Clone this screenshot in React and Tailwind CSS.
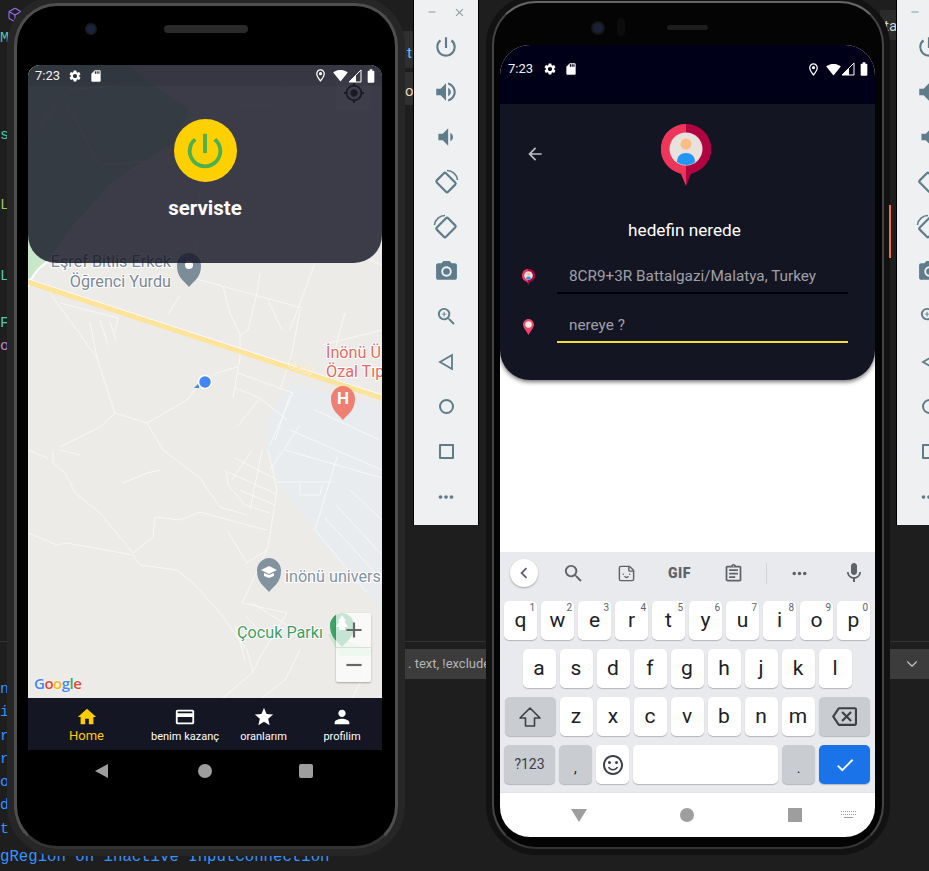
import {
  MdSettings, MdSdCard, MdOutlineLocationOn, MdSignalWifi4Bar, MdBatteryFull, MdHome, MdCreditCard, MdStar, MdPerson,
  MdPowerSettingsNew, MdVolumeUp, MdVolumeDown, MdPhotoCamera, MdOutlineZoomIn, MdMoreHoriz, MdGpsFixed, MdAdd, MdRemove,
  MdArrowBack, MdSearch, MdMic, MdCheck, MdOutlineBackspace, MdChevronLeft, MdClose, MdOutlineSentimentSatisfied, MdOutlineAssignment,
} from 'react-icons/md';
import { Box, ChevronDown, Sticker } from 'lucide-react';

function Signal() {
  return (
    <svg width="14" height="14" viewBox="0 0 14 14">
      <path d="M13 1V13H1Z" fill="none" stroke="#fff" strokeWidth="1" />
      <path d="M8 6V13H1Z" fill="#fff" />
    </svg>
  );
}

function StatusBar({ className, timeWidth }) {
  return (
    <div className={`flex items-center text-[13px] text-[#f1f1f1] ${className}`}>
      <span className={timeWidth}>7:23</span>
      <MdSettings size={14} className="text-white" />
      <MdSdCard size={14} className="ml-[7px] text-white" />
      <div className="flex-1" />
      <MdOutlineLocationOn size={15} className="text-white" />
      <MdSignalWifi4Bar size={15} className="ml-[5px] text-white" />
      <Signal />
      <MdBatteryFull size={16} className="ml-[1px] text-white" />
    </div>
  );
}

function PersonPin({ size }) {
  return (
    <svg width={size} height={size * 1.24} viewBox="0 0 50 62">
      <path d="M25 0A25 25 0 0 0 15 48L20 50L25 62Z" fill="#f0355a" />
      <path d="M25 0A25 25 0 0 1 35 48L30 50L25 62Z" fill="#b00540" />
      <circle cx="25" cy="25" r="16.5" fill="#e9e1dc" />
      <circle cx="25" cy="20" r="5.5" fill="#fbbd84" />
      <path d="M16 38C16 32 20 29 25 29C30 29 34 32 34 38C30 42 20 42 16 38Z" fill="#2196f3" />
    </svg>
  );
}

function DotPin() {
  return (
    <svg width="11" height="16" viewBox="0 0 22 32">
      <path d="M11 0C5 0 0 5 0 11C0 18 7 24 11 32C15 24 22 18 22 11C22 5 17 0 11 0Z" fill="#f0446a" />
      <circle cx="11" cy="11" r="6.5" fill="#f5ebe6" />
    </svg>
  );
}

function Pin({ x, y, color, children }) {
  return (
    <g transform={`translate(${x} ${y})`}>
      <path d="M0 17C-6 10-12 7-12-4.500C-12-11-6.500-17 0-17C6.500-17 12-11 12-4.500C12 7 6 10 0 17Z" fill={color} />
      {children}
    </g>
  );
}

const roads = [
  'M193 278L302 308', 'M223 287L230 313L240 335L240 357L233 398', 'M260 273L257 293L248 330L240 335', 'M180 295L168 315',
  'M50 293L97 358L115 413L147 423L187 400L197 387L217 373L237 367', 'M238 373L293 393', 'M235 388L260 398L287 420', 'M260 398L237 427',
  'M115 413L100 427L60 447', 'M147 423L163 450', 'M300 310L292 353L280 390', 'M345 313L340 330L335 350', 'M322 345L382 330',
  'M60 303L118 318L115 332', 'M90 322L97 358', 'M100 320L108 345', 'M110 322L116 340', 'M53 450L53 463L65 473L75 493L100 513L133 553',
  'M28 533L57 545L67 543L133 555', 'M133 553L153 537L155 517L180 520L200 512L247 525L267 530',
  'M133 555L140 565L177 570L193 583L220 613L247 650L253 672L223 698', 'M163 450L200 478L220 507L247 515', 'M123 483L147 473L160 470',
  'M228 532L247 563L267 550', 'M268 450L277 490L268 547L247 593L242 603', 'M337 457L315 530', 'M277 482L333 482', 'M300 484L300 495L320 495L322 485',
  'M226 470L228 485L245 505L270 513', 'M235 458L277 480', 'M228 472L276 494', 'M240 490L275 505', 'M252 450L232 480', 'M262 450L250 510',
  'M315 530L367 593', 'M325 518L382 580', 'M336 505L382 555', 'M350 490L382 520', 'M242 603L287 613L260 657L253 672', 'M252 603L287 625',
  'M245 615L268 640', 'M235 625L245 660', 'M28 450L48 458', 'M60 450L80 455', 'M300 650L285 680L262 698', 'M360 655L370 665L352 698',
  'M268 300L282 330', 'M315 410L380 440', 'M290 395L275 440', 'M293 393L270 445', 'M290 430L382 470', 'M300 425L270 470', 'M285 450L382 478',
  'M345 75L270 105L230 105L170 150L130 170L95 205L67 233', 'M275 75L300 95L355 135', 'M230 105L260 145L300 165L380 195',
  'M28 140L70 90L120 85', 'M67 105L100 165L170 160', 'M170 160L190 210L250 230', 'M300 165L360 255L382 265', 'M170 150L200 190L195 263',
  'M60 245L110 260', 'M315 263L290 330',
];

function MapArt() {
  return (
    <svg viewBox="28 65 354 633" width="354" height="633" className="absolute inset-0 block" fontFamily="Roboto, sans-serif">
      <rect x="28" y="65" width="354" height="633" fill="#ecebe8" />
      <path d="M265 423L290 383L382 405L382 610L367 593L315 537L316 530L277 483L268 450Z" fill="#e9ecef" />
      <path d="M28 65L130 65L145 80L190 110L173 143L110 183L67 233L50 257L40 270L28 280Z" fill="#c9e7c9" />
      <path d="M328 634L372 650L370 656L340 656Z" fill="#c9e7c9" />
      <g fill="none" stroke="#fff" strokeWidth="0.800" opacity="0.800">
        {roads.map((d) => <path key={d} d={d} />)}
      </g>
      <path d="M28 287C33 272 44 262 58 256" fill="none" stroke="#fff" strokeWidth="2" />
      <path d="M28 279L382 395" stroke="#fff" strokeWidth="1" />
      <path d="M28 282L382 398" stroke="#fde49b" strokeWidth="5" />
      <text x="300" y="372" transform="rotate(18 300 372)" fontSize="11" textAnchor="middle" fill="#fff" stroke="#f3d98b" strokeWidth="0.300">D300</text>

      <g fontSize="16.200" stroke="#fff" strokeWidth="2" style={{ paintOrder: 'stroke' }}>
        <text x="171" y="267" textAnchor="end" fill="#7a8894">Eşref Bitlis Erkek</text>
        <text x="171" y="287" textAnchor="end" fill="#7a8894">Öğrenci Yurdu</text>
        <text x="326" y="358" fill="#e56a60">İnönü Ü</text>
        <text x="326" y="377" fill="#e56a60">Özal Tıp</text>
        <text x="285" y="582" fill="#83929f">inönü univers</text>
        <text x="237" y="638" fill="#3f9d62">Çocuk Parkı</text>
      </g>

      <Pin x={189} y={270} color="#7d8c99"><circle cx="0" cy="-5" r="4" fill="#fff" /></Pin>
      <Pin x={343} y={403} color="#ef7f72">
        <text x="0" y="1" textAnchor="middle" fontSize="17" fontWeight="700" fill="#fff">H</text>
      </Pin>
      <Pin x={269} y={575} color="#83929f">
        <path d="M-8-5L0-9L8-5L0-1Z M-5-2L0 0L5-2L5 1L0 3L-5 1Z" fill="#fff" />
      </Pin>
      <Pin x={342} y={630} color="#3fa468">
        <path d="M0-15L4-9L2.500-9L6-3L3-3L3 0L-3 0L-3-3L-6-3L-2.500-9L-4-9Z" fill="#fff" />
      </Pin>

      <path d="M199 383L194 388L199 388Z" fill="#4285f4" />
      <circle cx="205" cy="382" r="6.500" fill="#4285f4" stroke="#fff" strokeWidth="1.500" />
    </svg>
  );
}

function Tab({ icon: Icon, label, className, size, labelClass }) {
  return (
    <div className={`flex flex-col items-center ${className}`}>
      <Icon size={size} />
      <span className={labelClass}>{label}</span>
    </div>
  );
}

function LeftPhone() {
  return (
    <div className="absolute left-[7px] top-[-4px] h-[860px] w-[398px] rounded-[50px] border-[7px] border-[#262626]">
      <div className="relative h-full w-full rounded-[43px] border-[3px] border-[#4e4e4e] border-b-[#333] bg-black pl-[11px] pt-[59px]">
        <div className="absolute left-[68px] top-[17px] h-[12px] w-[12px] rounded-full border-2 border-[#1b1b1e] bg-[#18233f]" />
        <div className="absolute left-[147px] top-[19px] h-[8px] w-[84px] rounded-full bg-[#2a2a2a]" />
        <div className="flex h-[730px] w-[354px] flex-col overflow-hidden rounded-t-[12px]">
          <div className="relative h-[633px] shrink-0 border-b border-[#c9c9c9]">
            <MapArt />
            <div className="absolute right-[11px] top-[10px] flex h-[35px] w-[35px] items-center justify-center bg-white/70 text-[#333]">
              <MdGpsFixed size={22} />
            </div>
            <div className="absolute bottom-[15px] right-[11px] flex h-[69px] w-[35px] flex-col rounded-[2px] bg-white/70 text-[#666] shadow-[0_1px_2px_rgba(0,0,0,.3)]">
              <div className="flex flex-1 items-center justify-center border-b border-[#ddd]"><MdAdd size={26} /></div>
              <div className="flex flex-1 items-center justify-center"><MdRemove size={26} /></div>
            </div>
            <div className="absolute bottom-[6px] left-[6px] flex text-[15px] font-semibold leading-none tracking-[-0.5px] [font-family:'Open_Sans',sans-serif] [text-shadow:0_0_2px_#fff]">
              <span className="text-[#4285f4]">G</span>
              <span className="text-[#ea4335]">o</span>
              <span className="text-[#fbbc05]">o</span>
              <span className="text-[#4285f4]">g</span>
              <span className="text-[#34a853]">l</span>
              <span className="text-[#ea4335]">e</span>
            </div>
            <div className="absolute left-0 right-0 top-0 flex h-[198px] flex-col items-center rounded-b-[28px] bg-[#151524]/[.82]">
              <StatusBar className="h-[21px] w-full shrink-0 bg-[#151524]/10 pl-[7px] pr-[3px]" timeWidth="w-[33px]" />
              <div className="mt-[33px] flex h-[63px] w-[63px] items-center justify-center rounded-full bg-[#ffd000]">
                <MdPowerSettingsNew size={46} className="text-[#4caf50]" />
              </div>
              <span className="mt-[14px] text-[20.500px] font-bold leading-[24px] text-white">serviste</span>
            </div>
          </div>
          <div className="flex h-[52px] shrink-0 bg-[#151623] pt-[8px] text-white">
            <Tab icon={MdHome} label="Home" size={22} className="w-[117px] text-[#ffcc00]" labelClass="text-[13px] leading-[16px]" />
            <Tab icon={MdCreditCard} label="benim kazanç" size={22} className="w-[80px]" labelClass="whitespace-nowrap text-[11px] leading-[17px]" />
            <Tab icon={MdStar} label="oranlarım" size={22} className="w-[77px]" labelClass="text-[11px] leading-[17px]" />
            <Tab icon={MdPerson} label="profilim" size={22} className="w-[80px]" labelClass="text-[11px] leading-[17px]" />
          </div>
          <div className="flex h-[42px] shrink-0 items-center pl-[67px]">
            <div className="h-0 w-0 border-y-[7px] border-r-[13px] border-y-transparent border-r-[#9e9e9e]" />
            <div className="ml-[90px] h-[14px] w-[14px] rounded-full bg-[#9e9e9e]" />
            <div className="ml-[87px] h-[14px] w-[14px] rounded-[2px] bg-[#9e9e9e]" />
          </div>
        </div>
      </div>
    </div>
  );
}

function Field({ pin, text, line }) {
  return (
    <div className="flex h-[49px] items-end pr-[27px]">
      <div className="flex h-[33px] w-[57px] items-center justify-center pr-[1px]">{pin}</div>
      <div className={`flex h-[34px] flex-1 items-center border-b-2 pl-[12px] text-[15.300px] text-[#9fa0a8] ${line}`}>{text}</div>
    </div>
  );
}

function Key({ label, sup, className = '', children }) {
  return (
    <div className={`relative flex h-[39px] w-[33px] shrink-0 items-center justify-center rounded-[5px] bg-white text-[21px] text-[#202124] shadow-[0_1px_1px_rgba(60,64,67,.3)] ${className}`}>
      {label}
      {children}
      {sup && <span className="absolute right-[2px] top-0 text-[10px] leading-[14px] text-[#5f6368]">{sup}</span>}
    </div>
  );
}

function Keyboard() {
  const row1 = [['q', '1'], ['w', '2'], ['e', '3'], ['r', '4'], ['t', '5'], ['y', '6'], ['u', '7'], ['i', '8'], ['o', '9'], ['p', '0']];
  return (
    <div className="h-[240px] bg-[#e8eaed]">
      <div className="flex h-[49px] items-center pb-[7px] text-[#5f6368]">
        <div className="ml-[10px] flex h-[28px] w-[28px] items-center justify-center rounded-full bg-white shadow-[0_1px_2px_rgba(0,0,0,.3)]">
          <MdChevronLeft size={22} />
        </div>
        <MdSearch size={23} className="ml-[24px]" />
        <Sticker size={19} strokeWidth={1.8} className="ml-[32px]" />
        <span className="ml-[32px] text-[14px] font-black tracking-[0.5px]">GIF</span>
        <MdOutlineAssignment size={21} className="ml-[32px]" />
        <div className="ml-[22px] h-[21px] w-px bg-[#d0d2d6]" />
        <MdMoreHoriz size={21} className="ml-[22px]" />
        <MdMic size={24} className="ml-[32px]" />
      </div>
      <div className="flex flex-col gap-[9px] pr-[1px]">
        <div className="flex justify-center gap-[4px]">
          {row1.map(([k, n]) => <Key key={k} label={k} sup={n} />)}
        </div>
        <div className="flex justify-center gap-[4px]">
          {['a', 's', 'd', 'f', 'g', 'h', 'j', 'k', 'l'].map((k) => <Key key={k} label={k} />)}
        </div>
        <div className="flex justify-center gap-[4px]">
          <Key className="!w-[51px] !bg-[#c9ccd1]">
            <svg width="22" height="22" viewBox="0 0 22 22"><path d="M11 2L21 12H15.500V20H6.500V12H1Z" fill="none" stroke="#3c4043" strokeWidth="1.600" strokeLinejoin="round" /></svg>
          </Key>
          {['z', 'x', 'c', 'v', 'b', 'n', 'm'].map((k) => <Key key={k} label={k} />)}
          <Key className="!w-[51px] !bg-[#c9ccd1]"><MdOutlineBackspace size={25} className="text-[#3c4043]" /></Key>
        </div>
        <div className="flex justify-center gap-[4px]">
          <Key label="?123" className="!w-[51px] !bg-[#c9ccd1] !text-[14px] !text-[#3c4043]" />
          <Key label="," className="!bg-[#c9ccd1] pt-[8px] !text-[14px]" />
          <Key><MdOutlineSentimentSatisfied size={24} className="text-[#3c4043]" /></Key>
          <Key className="!w-[145px]" />
          <Key label="." className="!bg-[#c9ccd1] pt-[8px] !text-[14px]" />
          <Key className="!w-[51px] !bg-[#1a73e8]"><MdCheck size={22} className="text-white" /></Key>
        </div>
      </div>
    </div>
  );
}

function RightPhone() {
  return (
    <div className="absolute left-[486px] top-[-5px] h-[860px] w-[404px] rounded-[50px] border-[6px] border-[#121212]">
      <div className="relative h-full w-full rounded-[44px] border-2 border-[#444] border-t-[#666] border-b-[#333] bg-[#040404] pl-[6px] pt-[42px]">
        <div className="absolute left-[97px] top-[18px] h-[14px] w-[14px] rounded-full border-2 border-[#15151a] bg-[#1a2136]" />
        <div className="absolute left-[123px] top-[15px] h-[18px] w-[8px] rounded-full bg-[#0c0c0c]" />
        <div className="absolute left-[173px] top-[22px] h-[5px] w-[41px] rounded-full bg-[#1d1d1d]" />
        <div className="flex h-[792px] w-[375px] flex-col overflow-hidden rounded-[30px] bg-white">
          <div className="h-[59px] shrink-0 bg-[#000018]">
            <StatusBar className="h-[48px] pl-[8px] pr-[3px]" timeWidth="w-[35px]" />
          </div>
          <div className="relative z-10 h-[276px] shrink-0 rounded-b-[30px] bg-[#141522] shadow-[0_2px_4px_rgba(0,0,0,.55)]">
            <div className="relative flex h-[112px] items-start justify-center pr-[4px] pt-[20px]">
              <MdArrowBack size={20} className="absolute left-[25px] top-[40px] text-[#bdbdc2]" />
              <PersonPin size={50} />
            </div>
            <div className="flex h-[30px] items-center justify-center pr-[6px] text-[17.200px] text-white">hedefin nerede</div>
            <div className="-mt-[1px]">
              <Field pin={<PersonPin size={13} />} text="8CR9+3R Battalgazi/Malatya, Turkey" line="border-[#00000f]" />
              <Field pin={<DotPin />} text="nereye ?" line="border-[#f5dc2e]" />
            </div>
          </div>
          <div className="flex-1" />
          <Keyboard />
          <div className="flex h-[45px] shrink-0 items-center border-t border-[#e1e3e6] pl-[71px]">
            <div className="h-0 w-0 border-x-[8px] border-t-[13px] border-x-transparent border-t-[#9e9e9e]" />
            <div className="ml-[93px] h-[14px] w-[14px] rounded-full bg-[#9e9e9e]" />
            <div className="ml-[94px] h-[14px] w-[14px] bg-[#9e9e9e]" />
            <div className="ml-[39px] flex h-[8px] w-[15px] flex-col gap-[2px]">
              <div className="border-t border-dotted border-[#9e9e9e]" />
              <div className="border-t border-dotted border-[#9e9e9e]" />
              <div className="mx-[3px] border-t border-[#9e9e9e]" />
            </div>
          </div>
        </div>
      </div>
    </div>
  );
}

function RotateIcon({ flip }) {
  return (
    <svg width="26" height="26" viewBox="0 0 26 26" fill="none" stroke="currentColor" strokeWidth="2.200" className={flip ? '-scale-x-100' : ''}>
      <rect x="5" y="7" width="16" height="13" rx="1.500" transform="rotate(45 13 13.500)" />
      <path d="M14 1.500C19 1.500 24 5.500 24.500 11" strokeWidth="1.600" />
    </svg>
  );
}

function Toolbar({ className }) {
  const icon = 'flex h-[45px] items-center justify-center';
  return (
    <div className={`absolute top-0 h-[525px] w-[66px] overflow-hidden border-x border-black bg-[#eef0f1] text-[#5f7c8a] ${className}`}>
      <div className="flex h-[24px] items-center pl-[12px] text-[#8a9aa3]">
        <MdRemove size={12} />
        <MdClose size={13} className="ml-[15px]" />
      </div>
      <div className={icon}><MdPowerSettingsNew size={26} /></div>
      <div className={icon}><MdVolumeUp size={26} /></div>
      <div className={icon}><MdVolumeDown size={26} /></div>
      <div className={icon}><RotateIcon /></div>
      <div className={icon}><RotateIcon flip /></div>
      <div className={icon}><MdPhotoCamera size={25} /></div>
      <div className={icon}><MdOutlineZoomIn size={23} /></div>
      <div className={icon}>
        <svg width="20" height="20" viewBox="0 0 20 20"><path d="M16 3V17L4 10Z" fill="none" stroke="currentColor" strokeWidth="1.800" /></svg>
      </div>
      <div className={icon}><div className="h-[15px] w-[15px] rounded-full border-2 border-current" /></div>
      <div className={icon}><div className="h-[15px] w-[15px] rounded-[1px] border-2 border-current" /></div>
      <div className={icon}><MdMoreHoriz size={22} /></div>
    </div>
  );
}

function CodeBehind() {
  const mono = "[font-family:'Liberation_Mono',monospace]";
  return (
    <>
      <div className="absolute left-[400px] top-[31px] h-[37px] w-[14px] bg-[#2f2f2f]" />
      <div className="absolute left-[400px] top-[72px] h-[33px] w-[14px] bg-[#303030]" />
      <div className="absolute left-[880px] top-[10px] h-[30px] w-[17px] bg-[#2b2b2b]" />
      <div className="absolute left-0 top-[641px] h-px w-[929px] bg-[#333]" />
      <div className="absolute left-[405px] top-[649px] flex h-[30px] w-[90px] items-center bg-[#3c3c3c] pl-[3px] text-[13px] text-[#b5b5b5]">. text, !exclude</div>
      <div className="absolute left-[890px] top-[649px] flex h-[30px] w-[39px] items-center justify-center bg-[#3c3c3c] pl-[5px] text-[#c8c8c8]"><ChevronDown size={18} strokeWidth={1.5} /></div>
      <div className="absolute left-[884px] top-[15px] text-[15px] text-[#cfd8dc]">ta</div>
      <div className="absolute left-[407px] top-[42px] text-[15px] text-[#4fc1ff]">t</div>
      <div className="absolute left-[405px] top-[80px] text-[15px] text-[#e8d9b0]">o.</div>
      <Box size={16} strokeWidth={1.6} className="absolute left-[7px] top-[7px] text-[#9a6ff0]" />
      <span className={`absolute left-0 top-[28px] text-[15px] text-[#4ec9b0] ${mono}`}>M</span>
      <span className={`absolute left-0 top-[125px] text-[15px] text-[#4ec9b0] ${mono}`}>s</span>
      <span className={`absolute left-0 top-[195px] text-[15px] text-[#9bc26a] ${mono}`}>L</span>
      <span className={`absolute left-0 top-[266px] text-[15px] text-[#4ec9b0] ${mono}`}>L</span>
      <span className={`absolute left-0 top-[313px] text-[15px] text-[#4ec9b0] ${mono}`}>F</span>
      <span className={`absolute left-0 top-[336px] text-[15px] text-[#c586c0] ${mono}`}>o</span>
      <div className={`absolute left-0 top-[681px] flex flex-col gap-[5.300px] text-[15px] leading-[18px] text-[#3794ff] ${mono}`}>
        <span>n</span><span>il</span><span>ra</span><span>re</span><span>or</span><span>di</span><span>t c</span>
      </div>
      <div className={`absolute left-0 top-[846px] whitespace-nowrap text-[15.700px] text-[#3794ff] ${mono}`}>gRegion on inactive InputConnection</div>
    </>
  );
}

export default function App() {
  return (
    <div className="relative h-[871px] w-[929px] overflow-hidden bg-[#1e1e1e] font-['Roboto',sans-serif]">
      <CodeBehind />
      <Toolbar className="left-[413px]" />
      <Toolbar className="left-[896px]" />
      <LeftPhone />
      <RightPhone />
      <div className="absolute left-[889px] top-[205px] h-[53px] w-[2px] bg-[#e8704a]" />
    </div>
  );
}
